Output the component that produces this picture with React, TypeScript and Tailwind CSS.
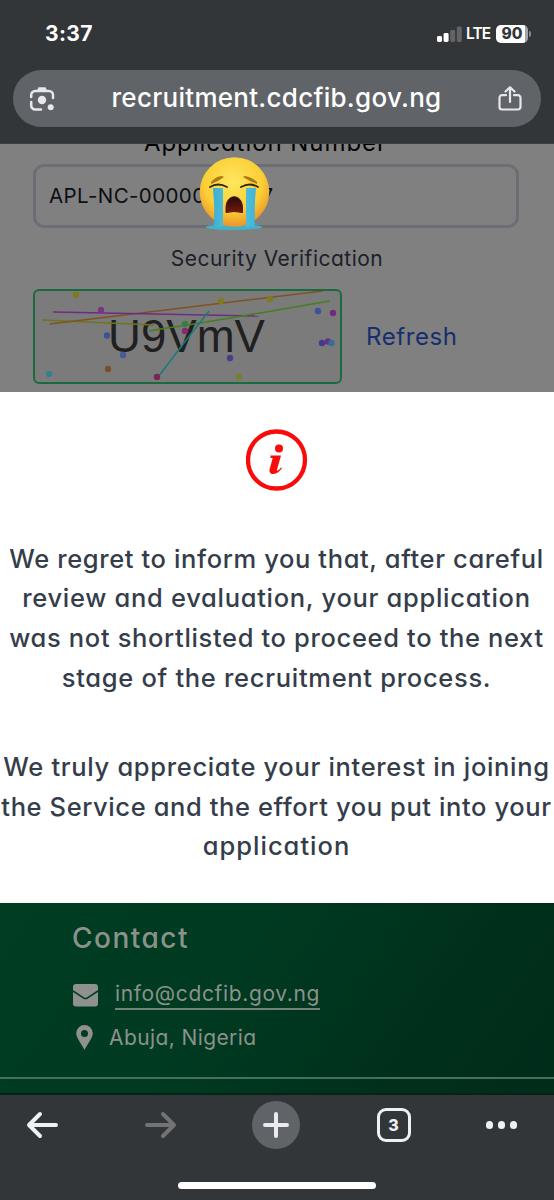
import React from "react";

const inter = "font-['Inter','Noto_Sans',sans-serif]";
const geo = "font-['Inter','Noto_Sans',sans-serif] [font-feature-settings:'cv11'] whitespace-nowrap";

function StatusBar() {
  return (
    <div className="flex h-[70px] items-start justify-between pl-[45px] pr-[23px] pt-[22px] text-white">
      <div className="text-[21px] font-bold leading-[24px] tracking-[0.4px]">3:37</div>
      <div className="flex h-[23px] items-center">
        <svg width="26" height="18" viewBox="0 0 26 18">
          <rect x="0" y="11" width="5" height="6" rx="1.4" fill="#fff" />
          <rect x="6.6" y="8" width="5" height="9" rx="1.4" fill="#fff" />
          <rect x="13.2" y="5" width="5" height="12" rx="1.4" fill="#626466" />
          <rect x="19.8" y="1.500" width="5" height="15.500" rx="1.4" fill="#626466" />
        </svg>
        <span className="ml-[3px] w-[30px] text-[15.500px] font-semibold leading-[22px] tracking-[-0.9px]">LTE</span>
        <div className="flex h-[18px] w-[32px] items-center justify-center rounded-[5px] bg-[linear-gradient(90deg,#fff_90%,#a2a4a5_90%)] text-[15.500px] font-extrabold leading-none text-[#33363a]">90</div>
        <div className="ml-[1px] h-[6px] w-[2px] rounded-r-full bg-[#8a8c8e]" />
      </div>
    </div>
  );
}

function AddressBar() {
  return (
    <div className="mx-[13px] flex h-[57px] items-center justify-between rounded-full bg-[#606367] pl-[16px] pr-[18px]">
      <svg width="26" height="26" viewBox="0 0 26 26" fill="none" stroke="#e6e8ed" strokeWidth="2.500" strokeLinecap="round">
        <path d="M2.200 11V9a4 4 0 0 1 4-4H20a4 4 0 0 1 4 4v3" />
        <path d="M8 4.500 9.500 1.300h7L18 4.500z" fill="#e6e8ed" stroke="none" />
        <path d="M2.200 16v3.600a4 4 0 0 0 4 4H12" />
        <circle cx="13" cy="14" r="4.200" fill="#e6e8ed" stroke="none" />
        <circle cx="21.700" cy="21.300" r="3" fill="#e6e8ed" stroke="none" />
      </svg>
      <div className="-mt-[2px] ml-[1px] whitespace-nowrap text-[26px] font-medium leading-[32px] tracking-[0.28px] text-white">recruitment.cdcfib.gov.ng</div>
      <svg width="26" height="27" viewBox="0 0 26 27" fill="none" stroke="#e6e8ed" strokeWidth="2.200" strokeLinecap="round" strokeLinejoin="round">
        <path d="M9 10.200H5a2.500 2.500 0 0 0-2.500 2.500V22A2.500 2.500 0 0 0 5 24.500h16a2.500 2.500 0 0 0 2.500-2.500v-9.300a2.500 2.500 0 0 0-2.500-2.500h-4M13 17V2.500M8.500 6.500 13 2.200l4.500 4.300" />
      </svg>
    </div>
  );
}

function CryingFace() {
  return (
    <svg className="absolute left-[197px] top-[13px]" width="76" height="74" viewBox="0 0 76 74">
      <defs>
        <radialGradient id="face" cx="0.48" cy="0.35" r="0.65">
          <stop offset="0" stopColor="#ffe75e" />
          <stop offset="0.65" stopColor="#fbce35" />
          <stop offset="1" stopColor="#e9952a" />
        </radialGradient>
        <linearGradient id="mouth" x1="0" y1="0" x2="0" y2="1">
          <stop offset="0" stopColor="#250c06" />
          <stop offset="1" stopColor="#781710" />
        </linearGradient>
        <linearGradient id="tear" x1="0" y1="0" x2="1" y2="0">
          <stop offset="0" stopColor="#3dafd0" />
          <stop offset="0.5" stopColor="#5cc8e4" />
          <stop offset="1" stopColor="#41b4d5" />
        </linearGradient>
      </defs>
      <ellipse cx="37" cy="70" rx="28" ry="2.800" fill="#45b0c9" />
      <circle cx="37.500" cy="35" r="34.800" fill="url(#face)" />
      <path d="M9 70q14-3 28 1 14-4 28-1 0 2.800-28 2.800T9 70z" fill="#45b0c9" />
      <path d="M16 31h10v39H17q1-20-1-39zM49 31h10q-2 20-1 39h-9z" fill="url(#tear)" />
      <path d="M14 25q5-6 11-6l2 1q-5 4-13 7zM46 20l2-1q7 1 12 6v2q-8-3-14-7z" fill="#ad7912" />
      <path d="M13 30q8-5 17 0M44 30q9-5 17 0" fill="none" stroke="#342511" strokeWidth="1.800" strokeLinecap="round" />
      <path d="M29 55.500V51c0-15 16.500-15 16.500 0v4.500q-8.200-2-16.500 0z" fill="url(#mouth)" stroke="#4a1b0a" strokeWidth="1" strokeLinejoin="round" />
    </svg>
  );
}

const dots: [number, number, string][] = [
  [43, 5, "#817820"], [68, 20, "#7a3485"], [188, 11, "#807a22"], [237, 9, "#817920"],
  [285, 21, "#3f529b"], [300, 23, "#702b80"], [152, 34, "#357f47"], [152, 41, "#812c70"],
  [74, 45.500, "#3e529a"], [90, 65, "#46599b"], [75, 79, "#7e4d27"], [16, 84, "#34818a"],
  [124, 87, "#7b2550"], [197, 68, "#443e8b"], [206, 87, "#6d842c"], [289, 53, "#443b91"],
  [295, 51.500, "#663181"], [298.500, 53, "#3c6a99"],
];

function Captcha() {
  return (
    <div className="h-[95px] w-[309px] overflow-hidden rounded-[6px] border-2 border-[#1b6a3f] bg-[#7b7b7b]">
      <svg width="305" height="91" viewBox="2 1 305 91">
        <text x="75" y="61.500" textLength="157" lengthAdjust="spacingAndGlyphs" fontSize="46" fontFamily="Liberation Sans, sans-serif" fill="#202020">U9VmV</text>
        <g fill="none" strokeWidth="1.500">
          <path d="M9 30l112 5" stroke="#6c761e" />
          <path d="M17 34L290 1" stroke="#815221" />
          <path d="M20 22l206 4" stroke="#6f2c83" />
          <path d="M116 41q17-3 32-5 38-6 61-10l88-15" stroke="#438020" />
          <path d="M125 87l29-38 22-28" stroke="#187b77" />
        </g>
        {dots.map(([x, y, c], i) => <circle key={i} cx={x} cy={y} r="3.200" fill={c} />)}
      </svg>
    </div>
  );
}

function FormArea() {
  return (
    <section className="relative h-[249px] overflow-hidden border-t border-[#3d3e40] bg-[#808080]">
      <div className={`${geo} -mt-[16px] h-[36px] pr-[23px] text-center text-[24px] leading-[30px] tracking-[0.95px] text-black`}>Application Number</div>
      <div className={`${geo} ml-[33px] flex h-[64px] w-[486px] items-center justify-between rounded-[11px] border-[3px] border-[#6b6e74] pl-[13px] pr-[243px] text-[20.500px] text-[#0c0e13]`}>
        <span className="tracking-[0.4px]">APL-NC-00000</span>
        <span>7</span>
      </div>
      <div className={`${geo} mt-[16px] h-[45px] text-center text-[21px] leading-[30px] tracking-[0.5px] text-[#1c2029]`}>Security Verification</div>
      <div className="ml-[33px] flex items-center gap-[24px]">
        <Captcha />
        <span className={`${geo} text-[24px] tracking-[0.6px] text-[#162e6e]`}>Refresh</span>
      </div>
      <CryingFace />
    </section>
  );
}

function Notice() {
  return (
    <section className={`${geo} flex h-[511px] flex-col items-center bg-white pt-[37px] text-[25.500px] font-medium leading-[39.700px] text-[#353d4b]`}>
      <svg className="mb-[47.500px] h-[62px] w-[62px] shrink-0" viewBox="0 0 62 62" fill="#fa0b0b">
        <circle cx="30.500" cy="31" r="28.500" fill="none" stroke="#fa0b0b" strokeWidth="4.300" />
        <circle cx="33" cy="19.500" r="4" />
        <path d="M24.500 26.500h10.500l-4 14c-.5 2 1 1.500 4-2l1 .8c-3 4-5.500 5.700-8.500 5.700-3.500 0-4.600-2.100-3.800-5l3-11h-2.200z" />
      </svg>
      <p className="flex flex-col items-center pr-[1px]">
        <span className="tracking-[0.62px]">We regret to inform you that, after careful</span>
        <span className="tracking-[0.7px]">review and evaluation, your application</span>
        <span className="tracking-[0.65px]">was not shortlisted to proceed to the next</span>
        <span className="tracking-[0.7px]">stage of the recruitment process.</span>
      </p>
      <p className="mt-[49.500px] flex flex-col items-center pr-[1px]">
        <span className="tracking-[0.67px]">We truly appreciate your interest in joining</span>
        <span className="tracking-[0.6px]">the Service and the effort you put into your</span>
        <span className="tracking-[1px]">application</span>
      </p>
    </section>
  );
}

function Footer() {
  return (
    <footer className={`${geo} h-[192px] border-b-2 border-[#062319] bg-[linear-gradient(125deg,#003d22_0%,#003a21_40%,#00301c_75%,#002c1a_100%)] pt-[17px] text-[#8b928c]`}>
      <h2 className="ml-[72px] text-[28px] font-medium leading-[36px] tracking-[1.5px]">Contact</h2>
      <div className="ml-[73px] mt-[21px] flex h-[34px] items-start">
        <svg className="mt-[7px]" width="25" height="23" viewBox="0 0 25 23" fill="#8e918e">
          <rect width="25" height="22.500" rx="3" />
          <path d="M0 7l10.500 6.800q2 1.400 4 0L25 7" fill="none" stroke="#003a21" strokeWidth="1.500" />
        </svg>
        <span className="ml-[17px] h-[33px] border-b-2 border-[#718477] text-[21px] leading-[33px] tracking-[0.65px]">info@cdcfib.gov.ng</span>
      </div>
      <div className="ml-[76px] mt-[10px] flex h-[33px] items-center">
        <svg width="17" height="25" viewBox="0 0 17 25" fill="#8e918e">
          <path fillRule="evenodd" d="M8.500 0A8.300 8.300 0 0 0 .2 8.300C.2 13 5.500 19 8.500 25c3-6 8.300-12 8.300-16.700A8.300 8.300 0 0 0 8.500 0Zm0 5a3.500 3.500 0 1 1 0 7 3.500 3.500 0 0 1 0-7Z" />
        </svg>
        <span className="ml-[16px] text-[21px] leading-[30px] tracking-[0.4px]">Abuja, Nigeria</span>
      </div>
      <div className="mt-[23px] h-[2px] bg-[#467059]" />
    </footer>
  );
}

function BottomBar() {
  return (
    <nav className="flex h-[105px] flex-col items-center bg-[#333639]">
      <div className="flex h-[60px] w-full items-center justify-between pl-[26px] pr-[37px]">
        <svg width="33" height="28" viewBox="0 0 33 28" fill="none" stroke="#edf0f5" strokeWidth="4" strokeLinecap="round" strokeLinejoin="round"><path d="M30 14H3M14 3 3 14l11 11" /></svg>
        <svg className="ml-[10px]" width="33" height="28" viewBox="0 0 33 28" fill="none" stroke="#717375" strokeWidth="4" strokeLinecap="round" strokeLinejoin="round"><path d="M3 14h27M19 3l11 11-11 11" /></svg>
        <div className="flex h-[48px] w-[48px] items-center justify-center rounded-full bg-[#606367]">
          <svg width="26" height="26" viewBox="0 0 26 26" stroke="#e9ebf0" strokeWidth="4" strokeLinecap="round"><path d="M13 2v22M2 13h22" /></svg>
        </div>
        <div className="ml-[2px] flex h-[34px] w-[34px] items-center justify-center rounded-[9px] border-[3px] border-[#edf0f5] text-[16px] font-extrabold text-[#edf0f5]">3</div>
        <div className="flex gap-[4.500px]">
          <span className="h-[7.500px] w-[7.500px] rounded-full bg-[#edf0f5]" />
          <span className="h-[7.500px] w-[7.500px] rounded-full bg-[#edf0f5]" />
          <span className="h-[7.500px] w-[7.500px] rounded-full bg-[#edf0f5]" />
        </div>
      </div>
      <div className="mt-[27px] h-[7px] w-[198px] rounded-full bg-white" />
    </nav>
  );
}

export default function App() {
  return (
    <main className={`${inter} h-[1200px] w-[554px] overflow-hidden bg-[#333639]`}>
      <header className="h-[143px] bg-[#333639]">
        <StatusBar />
        <AddressBar />
      </header>
      <FormArea />
      <Notice />
      <Footer />
      <BottomBar />
    </main>
  );
}
